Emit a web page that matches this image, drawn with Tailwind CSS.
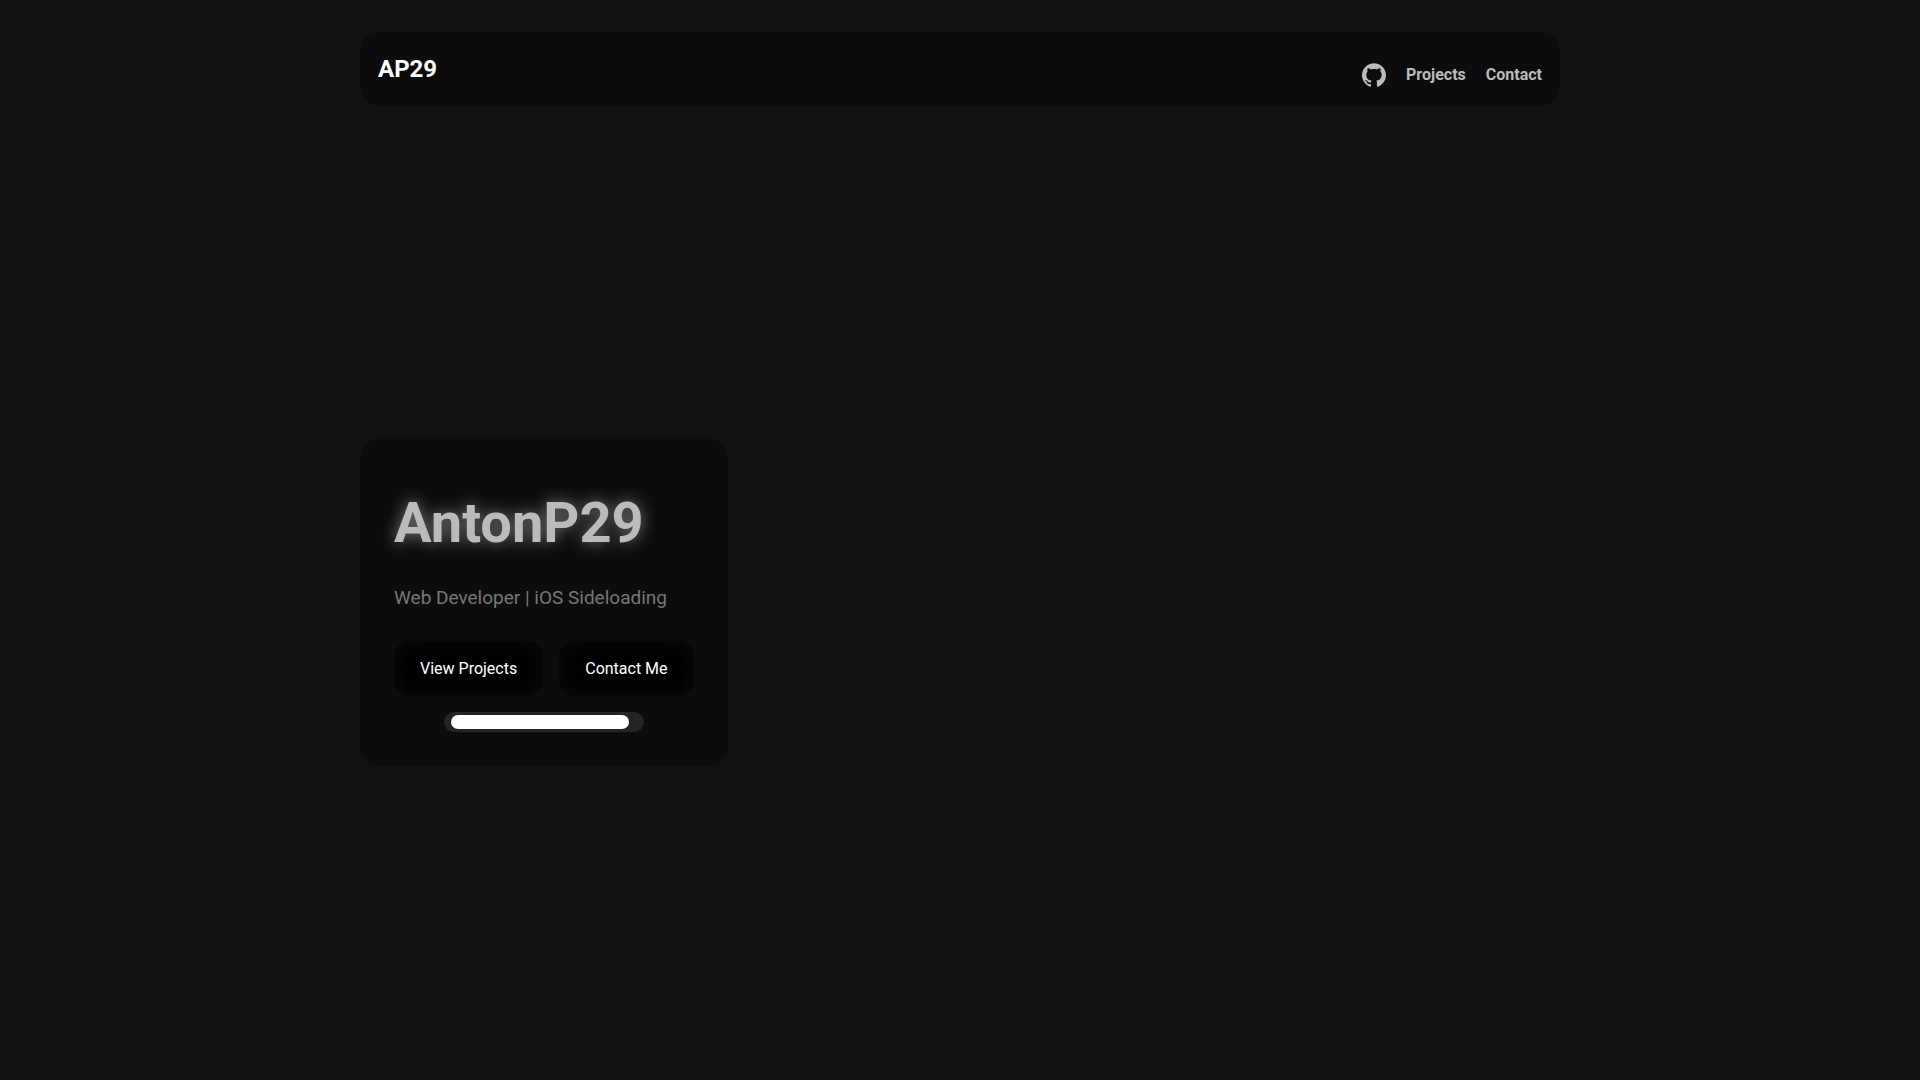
<!DOCTYPE html>
<html lang="en">
  <head>
    <meta charset="UTF-8" />
    <meta name="viewport" content="width=device-width, initial-scale=1.0" />
    <title>AntonP29</title>
    <script src="https://cdn.jsdelivr.net/npm/@tailwindcss/browser@4"></script>
  </head>
  <body class="bg-[#121212] text-white font-[Roboto,sans-serif] min-h-screen px-4 py-8">
    <div class="max-w-[1200px] mx-auto">
      <!-- Navbar -->
      <nav class="flex items-center justify-between h-[74px] px-[18px] rounded-[20px] bg-[#0c0c0c] shadow-[0_4px_30px_rgba(0,0,0,0.1)]">
        <a href="#" class="text-2xl font-bold">AP29</a>
        <ul class="flex items-center gap-5 pt-3 font-bold leading-[26px] text-[#bbbbbb]">
          <li>
            <a href="https://github.com/AntonP29" aria-label="GitHub">
              <svg class="block size-6" viewBox="0 0 24 24" fill="currentColor" aria-hidden="true">
                <path d="M12 .297c-6.63 0-12 5.373-12 12 0 5.303 3.438 9.8 8.205 11.385.6.113.82-.258.82-.577 0-.285-.01-1.04-.015-2.04-3.338.724-4.042-1.61-4.042-1.61C4.422 18.07 3.633 17.7 3.633 17.7c-1.087-.744.084-.729.084-.729 1.205.084 1.838 1.236 1.838 1.236 1.07 1.835 2.809 1.305 3.495.998.108-.776.417-1.305.76-1.605-2.665-.3-5.466-1.332-5.466-5.93 0-1.31.465-2.38 1.235-3.22-.135-.303-.54-1.523.105-3.176 0 0 1.005-.322 3.3 1.23.96-.267 1.98-.399 3-.405 1.02.006 2.04.138 3 .405 2.28-1.552 3.285-1.23 3.285-1.23.645 1.653.24 2.873.12 3.176.765.84 1.23 1.91 1.23 3.22 0 4.61-2.805 5.625-5.475 5.92.42.36.81 1.096.81 2.22 0 1.606-.015 2.896-.015 3.286 0 .315.21.69.825.57C20.565 22.092 24 17.592 24 12.297c0-6.627-5.373-12-12-12" />
              </svg>
            </a>
          </li>
          <li><a href="#projects">Projects</a></li>
          <li><a href="#contact">Contact</a></li>
        </ul>
      </nav>

      <!-- Hero -->
      <main class="mt-[333px] w-fit p-[34px] rounded-[20px] bg-[#0c0c0c] shadow-[0_4px_30px_rgba(0,0,0,0.1)]">
        <h1 class="mt-4 text-[56px] leading-[68px] font-bold text-[#bbbbbb] [text-shadow:0_0_15px_#808080]">AntonP29</h1>
        <p class="mt-[29px] text-[19px] leading-6 text-[#777777]">Web Developer | iOS Sideloading</p>
        <div class="flex gap-4 mt-[31px]">
          <button class="h-[55px] px-[26px] rounded-2xl bg-[#020202] shadow-[inset_0_0_20px_#0c0c0c]">View Projects</button>
          <button class="h-[55px] px-[26px] rounded-2xl bg-[#020202] shadow-[inset_0_0_20px_#0c0c0c]">Contact Me</button>
        </div>
        <div role="progressbar" aria-label="Loading" aria-valuenow="96" class="mt-4 mx-auto w-[200px] px-[7px] py-[3px] rounded-[10px] bg-[#242424]">
          <div class="h-[14px] rounded-[7px] bg-white" style="width: 96%"></div>
        </div>
      </main>
    </div>
  </body>
</html>
